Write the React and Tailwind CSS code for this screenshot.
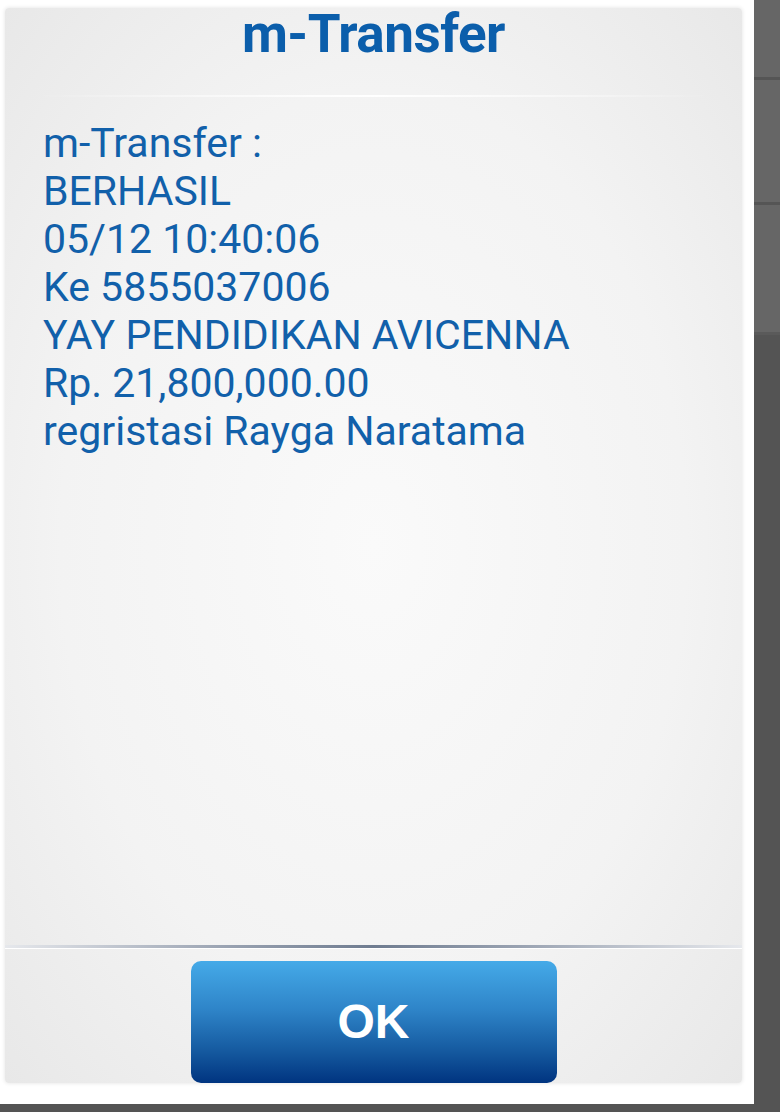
export default function App() {
  const lines = [
    "m-Transfer :",
    "BERHASIL",
    "05/12 10:40:06",
    "Ke 5855037006",
    "YAY PENDIDIKAN AVICENNA",
    "Rp. 21,800,000.00",
    "regristasi Rayga Naratama",
  ];
  return (
    <div className="w-[780px] h-[1112px] flex flex-col bg-[#545454] overflow-hidden" style={{ fontFamily: "Roboto, 'Liberation Sans', sans-serif" }}>
      <div className="flex h-[1104px]">
        <div className="w-[754px] h-full bg-white pt-[8px] pl-[5px] pr-[12px] pb-[21px]">
          <div className="h-full rounded-[4px] flex flex-col shadow-[0_0_4px_rgba(0,0,0,0.12)] bg-[radial-gradient(ellipse_at_center,#fafafa_0%,#f3f3f3_60%,#e8e8e8_100%)]">
            <div className="h-[87px] flex flex-col items-center">
              <div className="text-[53px] leading-[56px] font-bold text-[#0b5eab] mt-[-2px] tracking-[-0.5px]">m-Transfer</div>
            </div>
            <div className="h-[2px] mx-[30px] bg-[linear-gradient(90deg,rgba(255,255,255,0),#ffffff_50%,rgba(255,255,255,0))]"></div>
            <div className="flex-1 pl-[38px] pt-[22px] text-[41px] leading-[48px] text-[#1160aa]">
              {lines.map((l, i) => (
                <div key={i}>{l}</div>
              ))}
            </div>
            <div className="h-[3px] bg-[linear-gradient(90deg,#e6e8ec_0%,#9aa3b2_30%,#6f7c90_50%,#9aa3b2_70%,#e6e8ec_100%)]"></div>
            <div className="h-[1px] bg-white"></div>
            <div className="h-[134px] flex justify-center pt-[12px]">
              <button className="w-[366px] h-[122px] rounded-[10px] bg-[linear-gradient(180deg,#45aae8_0%,#2e84c8_40%,#14589e_75%,#003480_100%)] text-white text-[48px] font-bold flex items-center justify-center" style={{ fontFamily: "'Liberation Sans', Arial, sans-serif" }}>
                <span className="leading-none">OK</span>
              </button>
            </div>
          </div>
        </div>
        <div className="flex-1 flex flex-col">
          <div className="h-[80px] bg-[#666666] border-b-[3px] border-[#555555]"></div>
          <div className="h-[125px] bg-[#666666] border-b-[3px] border-[#555555]"></div>
          <div className="h-[130px] bg-[#666666] border-b-[3px] border-[#5a5a5a]"></div>
          <div className="flex-1 bg-[#545454]"></div>
        </div>
      </div>
      <div className="flex-1 bg-[#545454]"></div>
    </div>
  );
}
